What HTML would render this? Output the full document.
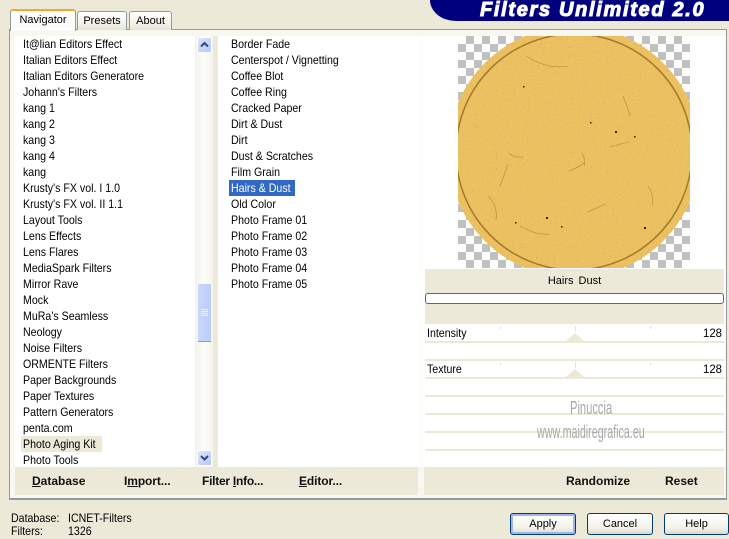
<!DOCTYPE html>
<html><head><meta charset="utf-8">
<style>
html,body{margin:0;padding:0}
body{width:729px;height:538px;overflow:hidden;position:relative;background:#ece9d8;font:12px "Liberation Sans",sans-serif;color:#000}
.a{position:absolute}
.t{position:absolute;white-space:nowrap;line-height:16px;height:16px}
.s{transform:scaleX(.885);transform-origin:0 50%}
.tab{position:absolute;box-sizing:border-box;border:1px solid #919b9c;border-bottom:none;border-radius:3px 3px 0 0;background:linear-gradient(#fff,#f1f0e8 70%,#e6e3d3);text-align:center;font-size:11px}
.list .t{left:0}
.list{transform:scaleX(.885);transform-origin:0 0}
.btn{position:absolute;box-sizing:border-box;top:513px;height:22px;border:1px solid #003c74;border-radius:3px;background:linear-gradient(#fff,#f3f2ea 70%,#dcd8c8);text-align:center;line-height:21px;font-size:11px}
.b{position:absolute;font-weight:bold;font-size:12px;line-height:16px;white-space:nowrap;color:#111}
.line{position:absolute;left:425px;width:299px;height:2px;background:#ece9d8}
.tri{position:absolute;width:0;height:0;border-left:9px solid transparent;border-right:9px solid transparent;border-bottom:8px solid #ece9d8}
.tick{position:absolute;width:1px;height:3px;background:#e6e3d3}
</style></head><body>

<!-- banner -->
<div class="a" style="left:430px;top:0;width:299px;height:21px;background:#00007f;border-bottom-left-radius:26px 21px"></div>
<div class="t" style="left:480px;top:-2px;height:24px;line-height:24px;font-weight:bold;font-style:italic;font-size:20px;letter-spacing:1.68px;color:#fff;-webkit-text-stroke:1px #fff">Filters Unlimited 2.0</div>

<!-- panel -->
<div class="a" style="left:9px;top:29px;width:718px;height:471px;box-sizing:border-box;border:1px solid #919b9c;border-bottom:2px solid #8f9a9b;background:#f8f7f2"></div>

<!-- tabs -->
<div class="tab" style="left:77px;top:11px;width:50px;height:19px;line-height:18px">Presets</div>
<div class="tab" style="left:129px;top:11px;width:43px;height:19px;line-height:18px">About</div>
<div class="tab" style="left:10px;top:9px;width:66px;height:22px;line-height:18px;background:#fcfcfa;border-top:2px solid #f3a72e;border-bottom:none;z-index:2">Navigator</div>

<!-- left list -->
<div class="a" style="left:15px;top:36px;width:180px;height:431px;background:#fff"></div>
<div class="a" style="left:21px;top:436px;width:81px;height:16px;background:#ece9d8"></div>
<div class="list a" style="left:23px;top:36px;font-size:12px">
<div class="t" style="top:0">It@lian Editors Effect</div>
<div class="t" style="top:16px">Italian Editors Effect</div>
<div class="t" style="top:32px">Italian Editors Generatore</div>
<div class="t" style="top:48px">Johann's Filters</div>
<div class="t" style="top:64px">kang 1</div>
<div class="t" style="top:80px">kang 2</div>
<div class="t" style="top:96px">kang 3</div>
<div class="t" style="top:112px">kang 4</div>
<div class="t" style="top:128px">kang</div>
<div class="t" style="top:144px">Krusty's FX vol. I 1.0</div>
<div class="t" style="top:160px">Krusty's FX vol. II 1.1</div>
<div class="t" style="top:176px">Layout Tools</div>
<div class="t" style="top:192px">Lens Effects</div>
<div class="t" style="top:208px">Lens Flares</div>
<div class="t" style="top:224px">MediaSpark Filters</div>
<div class="t" style="top:240px">Mirror Rave</div>
<div class="t" style="top:256px">Mock</div>
<div class="t" style="top:272px">MuRa's Seamless</div>
<div class="t" style="top:288px">Neology</div>
<div class="t" style="top:304px">Noise Filters</div>
<div class="t" style="top:320px">ORMENTE Filters</div>
<div class="t" style="top:336px">Paper Backgrounds</div>
<div class="t" style="top:352px">Paper Textures</div>
<div class="t" style="top:368px">Pattern Generators</div>
<div class="t" style="top:384px">penta.com</div>
<div class="t" style="top:400px">Photo Aging Kit</div>
<div class="t" style="top:416px">Photo Tools</div>
</div>

<!-- scrollbar -->
<div class="a" style="left:195px;top:36px;width:18px;height:431px;background:linear-gradient(90deg,#f3f2ea,#fdfdfa 50%,#f3f2ea)"></div>
<div class="a" style="left:197px;top:37px;width:15px;height:16px;box-sizing:border-box;border:1px solid #fff;border-radius:2px;background:linear-gradient(135deg,#dde6fb,#b4c8f6)">
<svg width="13" height="14" style="display:block"><path d="M3 8.5L6.5 5L10 8.5" fill="none" stroke="#33457f" stroke-width="2"/></svg></div>
<div class="a" style="left:197px;top:283px;width:15px;height:59px;box-sizing:border-box;border:1px solid #f4f6fd;border-bottom:1px solid #7f9de0;border-radius:2px;background:linear-gradient(90deg,#c9d7fa,#bccdf8)">
<svg width="13" height="57" style="display:block"><path d="M3 25.5h7M3 27.5h7M3 29.5h7M3 31.5h7" stroke="#eef2fe" stroke-width="1"/></svg></div>
<div class="a" style="left:197px;top:450px;width:15px;height:16px;box-sizing:border-box;border:1px solid #fff;border-radius:2px;background:linear-gradient(135deg,#dde6fb,#b4c8f6)">
<svg width="13" height="14" style="display:block"><path d="M3 5L6.5 8.5L10 5" fill="none" stroke="#33457f" stroke-width="2"/></svg></div>
<div class="a" style="left:213px;top:36px;width:5px;height:431px;background:#ece9d8"></div>

<!-- middle list -->
<div class="a" style="left:218px;top:36px;width:200px;height:431px;background:#fff"></div>
<div class="a" style="left:418px;top:36px;width:6px;height:431px;background:#fdfdfb"></div>
<div class="a" style="left:229px;top:180px;width:66px;height:16px;background:#316ac5"></div>
<div class="list a" style="left:231px;top:36px;font-size:12px">
<div class="t" style="top:0">Border Fade</div>
<div class="t" style="top:16px">Centerspot / Vignetting</div>
<div class="t" style="top:32px">Coffee Blot</div>
<div class="t" style="top:48px">Coffee Ring</div>
<div class="t" style="top:64px">Cracked Paper</div>
<div class="t" style="top:80px">Dirt &amp; Dust</div>
<div class="t" style="top:96px">Dirt</div>
<div class="t" style="top:112px">Dust &amp; Scratches</div>
<div class="t" style="top:128px">Film Grain</div>
<div class="t" style="top:144px;color:#fff">Hairs &amp; Dust</div>
<div class="t" style="top:160px">Old Color</div>
<div class="t" style="top:176px">Photo Frame 01</div>
<div class="t" style="top:192px">Photo Frame 02</div>
<div class="t" style="top:208px">Photo Frame 03</div>
<div class="t" style="top:224px">Photo Frame 04</div>
<div class="t" style="top:240px">Photo Frame 05</div>
</div>

<!-- bottom strip left -->
<div class="a" style="left:15px;top:467px;width:403px;height:28px;background:#ece9d8"></div>
<div class="b" style="left:32px;top:473px"><u>D</u>atabase</div>
<div class="b" style="left:124px;top:473px;letter-spacing:-.1px">I<u>m</u>port...</div>
<div class="b" style="left:202px;top:473px;letter-spacing:-.25px">Filter <u>I</u>nfo...</div>
<div class="b" style="left:299px;top:473px;letter-spacing:-.1px"><u>E</u>ditor...</div>

<!-- right panel -->
<div class="a" style="left:424px;top:36px;width:301px;height:431px;background:#fff"></div>
<svg class="a" style="left:458px;top:36px" width="232" height="232" viewBox="0 0 232 232">
<defs>
<pattern id="ck" width="16" height="16" patternUnits="userSpaceOnUse">
<rect x="8" y="0" width="8" height="8" fill="#c0c0c0"/><rect x="0" y="8" width="8" height="8" fill="#c0c0c0"/>
</pattern>
<filter id="n" x="0" y="0" width="100%" height="100%">
<feTurbulence type="fractalNoise" baseFrequency=".55" numOctaves="3" seed="7"/>
<feColorMatrix values="0 0 0 0 .45  0 0 0 0 .32  0 0 0 0 .08  1.9 1.9 0 0 -2.05"/>
</filter>
<clipPath id="c"><circle cx="116" cy="116" r="126"/></clipPath>
</defs>
<rect width="232" height="232" fill="url(#ck)"/>
<circle cx="116" cy="116" r="126" fill="#ecc161"/>
<rect width="232" height="232" filter="url(#n)" clip-path="url(#c)" opacity=".4"/>
<circle cx="116" cy="116" r="118" fill="none" stroke="#9a7026" stroke-width="1.5" opacity=".9"/>
<g fill="none" stroke="#6f5220" stroke-width=".6" opacity=".5">
<path d="M51 117Q56 122 65 121"/><path d="M111 135Q120 132 127 126"/><path d="M152 111Q162 108 171 106"/>
<path d="M50 128Q46 140 42 150"/><path d="M165 60Q170 72 172 80"/><path d="M68 20Q90 34 110 30"/>
<path d="M124 117Q128 124 126 130M148 168Q138 172 130 176"/><path d="M30 160Q40 170 38 184"/>
<path d="M190 150Q196 158 194 170M62 190Q80 200 92 198"/>
</g>
<g fill="#2e2008"><rect x="157" y="95" width="2" height="2"/><rect x="88" y="181" width="2" height="2"/><rect x="65" y="50" width="1.5" height="1.5"/><rect x="186" y="191" width="2" height="2"/><rect x="132" y="86" width="1.5" height="1.5"/><rect x="57" y="186" width="1.5" height="1.5"/><rect x="176" y="100" width="1.5" height="1.5"/><rect x="103" y="190" width="1.5" height="1.5"/></g>
</svg>

<!-- title block -->
<div class="a" style="left:425px;top:269px;width:299px;height:55px;background:#ece9d8"></div>
<div class="t" style="left:425px;width:299px;text-align:center;top:273px;font-size:11px;word-spacing:2px">Hairs Dust</div>
<div class="a" style="left:425px;top:293px;width:299px;height:11px;box-sizing:border-box;border:1px solid #666;border-radius:3px;background:#fff"></div>

<!-- sliders -->
<div class="line" style="top:341px"></div>
<div class="line" style="top:359px"></div>
<div class="line" style="top:377px"></div>
<div class="line" style="top:395px"></div>
<div class="line" style="top:413px"></div>
<div class="line" style="top:431px"></div>
<div class="line" style="top:449px"></div>
<div class="tick" style="left:500px;top:326px"></div><div class="tick" style="left:575px;top:326px;height:6px"></div><div class="tick" style="left:650px;top:326px"></div>
<div class="tick" style="left:500px;top:362px"></div><div class="tick" style="left:575px;top:362px;height:6px"></div><div class="tick" style="left:650px;top:362px"></div>
<div class="tri" style="left:566px;top:333px"></div>
<div class="tri" style="left:566px;top:369px"></div>
<div class="t s" style="left:427px;top:325px">Intensity</div>
<div class="t" style="left:703px;top:325px;transform:scaleX(.95);transform-origin:0 50%">128</div>
<div class="t s" style="left:427px;top:361px">Texture</div>
<div class="t" style="left:703px;top:361px;transform:scaleX(.95);transform-origin:0 50%">128</div>

<!-- watermark -->
<div class="t" style="left:570px;top:399px;height:18px;line-height:18px;font-size:18px;color:#a8a8a8;transform:scaleX(.62);transform-origin:0 50%">Pinuccia</div>
<div class="t" style="left:537px;top:423px;height:18px;line-height:18px;font-size:18px;color:#a8a8a8;transform:scaleX(.595);transform-origin:0 50%">www.maidiregrafica.eu</div>

<!-- bottom strip right -->
<div class="a" style="left:424px;top:467px;width:300px;height:28px;background:#ece9d8"></div>
<div class="b" style="left:566px;top:473px">Randomize</div>
<div class="b" style="left:665px;top:473px">Reset</div>

<!-- status -->
<div class="t s" style="left:11px;top:510px">Database:</div>
<div class="t s" style="left:68px;top:510px">ICNET-Filters</div>
<div class="t s" style="left:11px;top:523px">Filters:</div>
<div class="t s" style="left:68px;top:523px">1326</div>

<!-- buttons -->
<div class="btn" style="left:510px;width:66px;box-shadow:inset 0 0 0 2px #9db8e4">Apply</div>
<div class="btn" style="left:587px;width:66px">Cancel</div>
<div class="btn" style="left:664px;width:65px">Help</div>

</body></html>
